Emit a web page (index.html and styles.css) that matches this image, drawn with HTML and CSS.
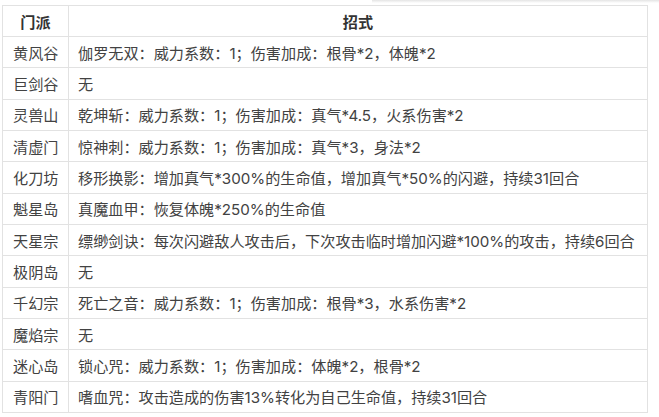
FILE: index.html
```html
<!DOCTYPE html>
<html lang="zh">
<head>
<meta charset="utf-8">
<link rel="stylesheet" href="styles.css">
</head>
<body>
<div class="topshade"></div>
<table class="grid">
  <thead>
    <tr><th class="c1">门派</th><th>招式</th></tr>
  </thead>
  <tbody>
    <tr><td class="c1">黄风谷</td><td>伽罗无双：威力系数：1；伤害加成：根骨*2，体魄*2</td></tr>
    <tr><td class="c1">巨剑谷</td><td>无</td></tr>
    <tr><td class="c1">灵兽山</td><td>乾坤斩：威力系数：1；伤害加成：真气*4.5，火系伤害*2</td></tr>
    <tr><td class="c1">清虚门</td><td>惊神刺：威力系数：1；伤害加成：真气*3，身法*2</td></tr>
    <tr><td class="c1">化刀坊</td><td>移形换影：增加真气*300%的生命值，增加真气*50%的闪避，持续31回合</td></tr>
    <tr><td class="c1">魁星岛</td><td>真魔血甲：恢复体魄*250%的生命值</td></tr>
    <tr><td class="c1">天星宗</td><td>缥缈剑诀：每次闪避敌人攻击后，下次攻击临时增加闪避*100%的攻击，持续6回合</td></tr>
    <tr><td class="c1">极阴岛</td><td>无</td></tr>
    <tr><td class="c1">千幻宗</td><td>死亡之音：威力系数：1；伤害加成：根骨*3，水系伤害*2</td></tr>
    <tr><td class="c1">魔焰宗</td><td>无</td></tr>
    <tr><td class="c1">迷心岛</td><td>锁心咒：威力系数：1；伤害加成：体魄*2，根骨*2</td></tr>
    <tr><td class="c1">青阳门</td><td>嗜血咒：攻击造成的伤害13%转化为自己生命值，持续31回合</td></tr>
  </tbody>
</table>
</body>
</html>
```
FILE: styles.css
```css
html, body {
  margin: 0;
  padding: 0;
  background: #fff;
}
body {
  position: relative;
  padding: 5px 0 0 2px;
  font-family: "Inter", "Noto Sans CJK SC", sans-serif;
  font-size: 15.15px;
  color: #424242;
}
.topshade {
  position: absolute;
  top: 0;
  left: 372px;
  right: 0;
  height: 3px;
  background: linear-gradient(#e4e4e4, rgba(255,255,255,0));
}
.grid {
  border-collapse: collapse;
  width: 646px;
  table-layout: fixed;
}
.grid tr {
  height: 31.33px;
}
.grid thead tr {
  height: 31px;
}
.grid th, .grid td {
  border: 1px solid #e2e2e2;
  padding: 3px 9px 0;
  white-space: nowrap;
  line-height: 18px;
  vertical-align: middle;
}
.grid th {
  font-weight: bold;
  color: #333;
  text-align: center;
}
.grid td {
  text-align: left;
}
.grid .c1 {
  width: 65px;
  padding-left: 10px;
  padding-right: 0;
}
.grid th.c1 {
  padding-left: 0;
  text-align: center;
}
```
